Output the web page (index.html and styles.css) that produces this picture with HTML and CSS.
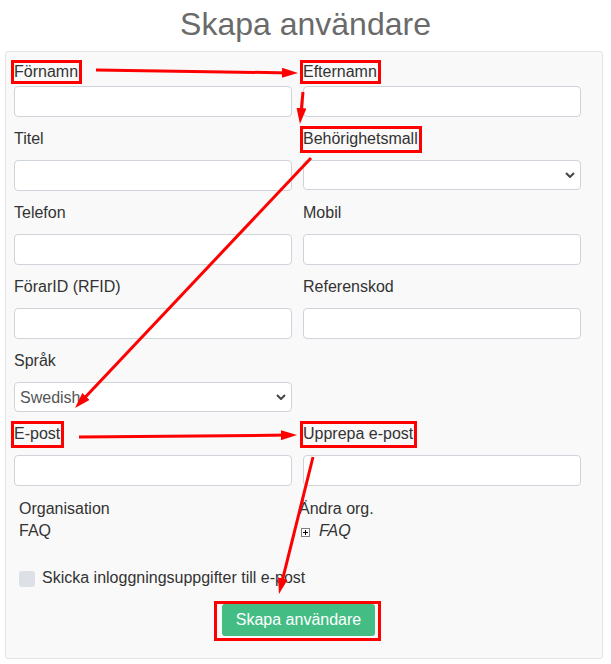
FILE: index.html
```html
<!DOCTYPE html>
<html lang="sv">
<head>
<meta charset="utf-8">
<title>Skapa användare</title>
<link rel="stylesheet" href="styles.css">
</head>
<body>
<h1 class="title">Skapa användare</h1>
<form class="panel">
  <div class="row first">
    <div class="field"><label class="lbl"><span class="hl">Förnamn</span></label><input class="ctl" type="text"></div>
    <div class="field"><label class="lbl"><span class="hl">Efternamn</span></label><input class="ctl" type="text"></div>
  </div>
  <div class="row">
    <div class="field"><label class="lbl">Titel</label><input class="ctl" type="text"></div>
    <div class="field"><label class="lbl"><span class="hl hl-b">Behörighetsmall</span></label><select class="ctl sel"><option></option></select></div>
  </div>
  <div class="row">
    <div class="field"><label class="lbl">Telefon</label><input class="ctl" type="text"></div>
    <div class="field"><label class="lbl">Mobil</label><input class="ctl" type="text"></div>
  </div>
  <div class="row">
    <div class="field"><label class="lbl">FörarID (RFID)</label><input class="ctl" type="text"></div>
    <div class="field"><label class="lbl">Referenskod</label><input class="ctl" type="text"></div>
  </div>
  <div class="row">
    <div class="field"><label class="lbl">Språk</label><select class="ctl sel"><option>Swedish</option></select></div>
    <div class="field"></div>
  </div>
  <div class="row">
    <div class="field"><label class="lbl"><span class="hl hl-b">E-post</span></label><input class="ctl" type="text"></div>
    <div class="field"><label class="lbl"><span class="hl hl-b">Upprepa e-post</span></label><input class="ctl" type="text"></div>
  </div>
  <div class="org">
    <div class="org-col">
      <div>Organisation</div>
      <div>FAQ</div>
    </div>
    <div class="org-col">
      <div>Ändra org.</div>
      <div class="tree"><svg class="plus" width="9" height="9" viewBox="0 0 9 9"><rect x="0.5" y="0.5" width="8" height="8" fill="#fff" stroke="#808080"/><path d="M2 4.5h5M4.5 2v5" stroke="#000" stroke-width="1"/></svg><em>FAQ</em></div>
    </div>
  </div>
  <div class="check">
    <input class="cb" type="checkbox"><span>Skicka inloggningsuppgifter till e-post</span>
  </div>
  <div class="actions">
    <span class="hl-btn"><button class="btn" type="button">Skapa användare</button></span>
  </div>
</form>
<svg class="arrows" width="611" height="664" viewBox="0 0 611 664">
  <defs>
    <marker id="ah" markerWidth="16" markerHeight="10" refX="8" refY="5" orient="auto" markerUnits="userSpaceOnUse">
      <path d="M0,0 L16,5 L0,10 z" fill="#f00"/>
    </marker>
  </defs>
  <g stroke="#f00" stroke-width="3" fill="none" marker-end="url(#ah)">
    <line x1="96" y1="70" x2="290" y2="72.9"/>
    <line x1="303" y1="92" x2="300.7" y2="116"/>
    <line x1="311" y1="158" x2="80.5" y2="402.2"/>
    <line x1="79" y1="437" x2="289" y2="435.1"/>
    <line x1="313" y1="457" x2="280.9" y2="586.2"/>
  </g>
</svg>
</body>
</html>
```

FILE: styles.css
```css
html, body {
  margin: 0;
  padding: 0;
}
body {
  position: relative;
  width: 611px;
  height: 664px;
  font-family: "Liberation Sans", Arial, sans-serif;
  font-size: 16px;
  color: #333;
  background: #fff;
  overflow: hidden;
}
.title {
  margin: 4px 0 7px;
  font-size: 32px;
  line-height: 40px;
  font-weight: normal;
  color: #6a6a6a;
  text-align: center;
}
.panel {
  margin: 0 0 0 5px;
  width: 598px;
  box-sizing: border-box;
  padding: 8px 21px 17px 8px;
  background: #f9f9f9;
  border: 1px solid #e4e4e4;
  border-radius: 3px;
}
.row {
  display: grid;
  grid-template-columns: 278px 278px;
  column-gap: 11px;
  margin-bottom: 10px;
}
.field {
  display: flex;
  flex-direction: column;
}
.lbl {
  line-height: 24px;
  height: 24px;
  margin-bottom: 9px;
}
.row.first .lbl {
  margin-bottom: 2px;
}
.hl {
  display: inline-block;
  line-height: 18px;
  outline: 3px solid #f00;
  padding: 0 1px 0 0;
}
.hl-b {
  padding: 1px 1px 2px 0;
}
.ctl {
  box-sizing: border-box;
  width: 278px;
  height: 31px;
  margin: 0;
  border: 1px solid #ced4da;
  border-radius: 4px;
  background: #fff;
  font-family: "Liberation Sans", Arial, sans-serif;
  font-size: 16px;
  color: #555;
  padding: 0 6px 0 5px;
}
.sel {
  height: 30px;
  appearance: none;
  -webkit-appearance: none;
  background-image: url("data:image/svg+xml,%3Csvg xmlns='http://www.w3.org/2000/svg' width='10' height='6' viewBox='0 0 10 6'%3E%3Cpath d='M1 1l4 4 4-4' fill='none' stroke='%23444' stroke-width='2'/%3E%3C/svg%3E");
  background-repeat: no-repeat;
  background-position: right 5px center;
  background-size: 10px 6px;
}
.org {
  display: grid;
  grid-template-columns: 280px 1fr;
  padding-left: 5px;
  margin-top: 12px;
  line-height: 22px;
}
.tree {
  display: flex;
  align-items: center;
}
.plus {
  margin: 0 9px 0 2px;
  position: relative;
  top: 1px;
}
.tree em {
  font-style: italic;
}
.check {
  display: flex;
  align-items: center;
  margin-top: 24px;
  line-height: 24px;
  padding-left: 5px;
}
.cb {
  appearance: none;
  -webkit-appearance: none;
  width: 16px;
  height: 16px;
  margin: 2px 7px 0 0;
  background: #dde0e5;
  border-radius: 3px;
  border: none;
}
.actions {
  margin-top: 11px;
  display: flex;
  justify-content: center;
}
.hl-btn {
  display: inline-block;
  border: 3px solid #f00;
  padding: 0 3px 2px 5px;
  font-size: 0;
}
.btn {
  height: 32px;
  padding: 0 14px;
  border: none;
  border-radius: 3px;
  background: #43bd84;
  color: #fff;
  font-family: "Liberation Sans", Arial, sans-serif;
  font-size: 16px;
  line-height: 32px;
}
.arrows {
  position: absolute;
  left: 0;
  top: 0;
  pointer-events: none;
}
```
